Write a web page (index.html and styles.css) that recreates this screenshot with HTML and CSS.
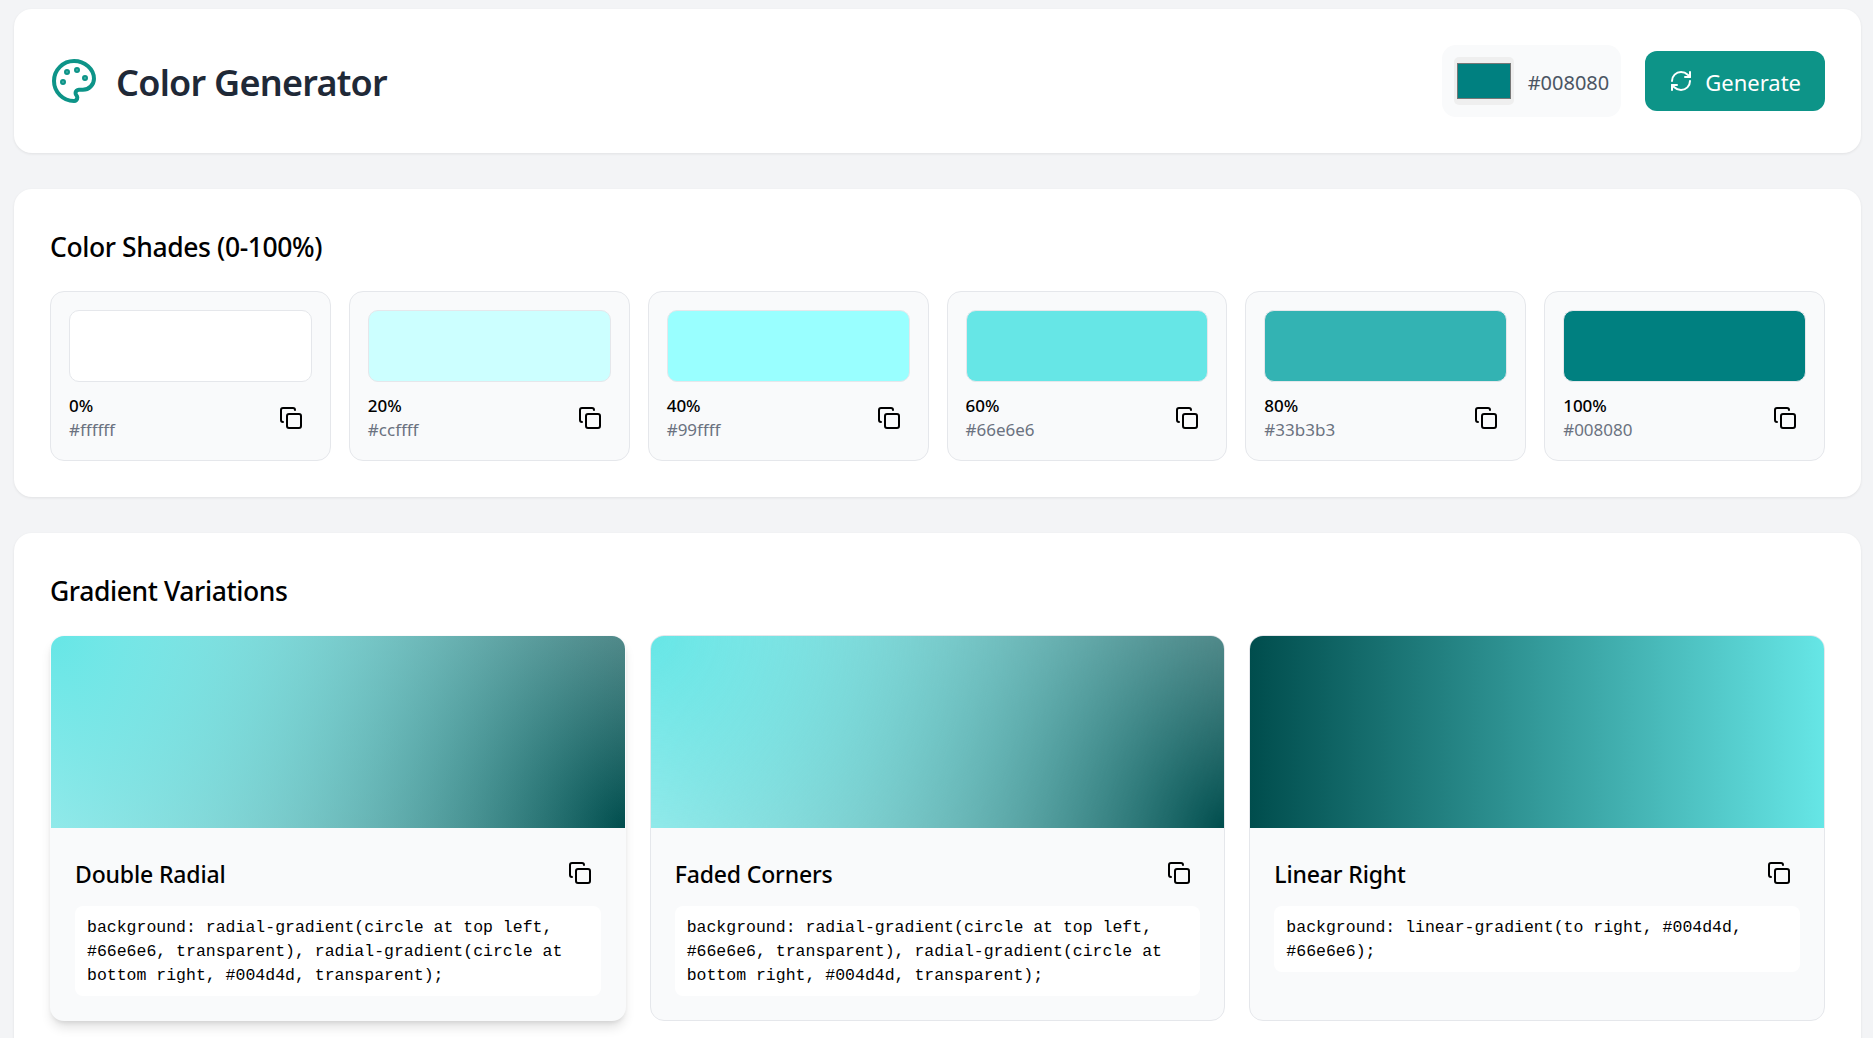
FILE: index.html
```html
<!DOCTYPE html>
<html lang="en">

<head>
	<meta charset="UTF-8">
	<title>Color Generator</title>
	<link rel="stylesheet" href="styles.css">
</head>
<body>
	<main>

		<!-- HEADER --------------------------------- -->
		<header class="panel topbar">
			<div class="brand">
				<svg class="brand-icon" viewBox="0 0 24 24"><circle cx="13.5" cy="6.5" r=".5" fill="currentColor"/><circle cx="17.5" cy="10.5" r=".5" fill="currentColor"/><circle cx="8.5" cy="7.5" r=".5" fill="currentColor"/><circle cx="6.5" cy="12.5" r=".5" fill="currentColor"/><path d="M12 2C6.5 2 2 6.5 2 12s4.5 10 10 10c.926 0 1.648-.746 1.648-1.688 0-.437-.18-.835-.437-1.125-.29-.289-.438-.652-.438-1.125a1.64 1.64 0 0 1 1.668-1.668h1.996c3.051 0 5.555-2.503 5.555-5.554C21.965 6.012 17.461 2 12 2z"/></svg>
				<h1>Color Generator</h1>
			</div>
			<div class="controls">
				<div class="picker">
					<input class="picker-input" type="color" value="#008080">
					<span class="nudge">#008080</span>
				</div>
				<button class="generate">
					<svg class="generate-icon" viewBox="0 0 24 24"><path d="M3 12a9 9 0 0 1 9-9 9.75 9.75 0 0 1 6.74 2.74L21 8"/><path d="M21 3v5h-5"/><path d="M21 12a9 9 0 0 1-9 9 9.75 9.75 0 0 1-6.74-2.74L3 16"/><path d="M8 16H3v5"/></svg>
					<span class="nudge">Generate</span>
				</button>
			</div>
		</header>

		<!-- SHADES --------------------------------- -->
		<section class="panel">
			<h2>Color Shades (0-100%)</h2>
			<div class="shades">
				<div class="shade">
					<div class="shade-swatch shade-0"></div>
					<div class="shade-info">
						<div><p class="shade-pct">0%</p><p class="shade-hex">#ffffff</p></div>
						<button class="copy"><svg viewBox="0 0 24 24"><rect x="8" y="8" width="14" height="14" rx="2"/><path d="M4 16c-1.1 0-2-.9-2-2V4c0-1.1.9-2 2-2h10c1.1 0 2 .9 2 2"/></svg></button>
					</div>
				</div>
				<div class="shade">
					<div class="shade-swatch shade-20"></div>
					<div class="shade-info">
						<div><p class="shade-pct">20%</p><p class="shade-hex">#ccffff</p></div>
						<button class="copy"><svg viewBox="0 0 24 24"><rect x="8" y="8" width="14" height="14" rx="2"/><path d="M4 16c-1.1 0-2-.9-2-2V4c0-1.1.9-2 2-2h10c1.1 0 2 .9 2 2"/></svg></button>
					</div>
				</div>
				<div class="shade">
					<div class="shade-swatch shade-40"></div>
					<div class="shade-info">
						<div><p class="shade-pct">40%</p><p class="shade-hex">#99ffff</p></div>
						<button class="copy"><svg viewBox="0 0 24 24"><rect x="8" y="8" width="14" height="14" rx="2"/><path d="M4 16c-1.1 0-2-.9-2-2V4c0-1.1.9-2 2-2h10c1.1 0 2 .9 2 2"/></svg></button>
					</div>
				</div>
				<div class="shade">
					<div class="shade-swatch shade-60"></div>
					<div class="shade-info">
						<div><p class="shade-pct">60%</p><p class="shade-hex">#66e6e6</p></div>
						<button class="copy"><svg viewBox="0 0 24 24"><rect x="8" y="8" width="14" height="14" rx="2"/><path d="M4 16c-1.1 0-2-.9-2-2V4c0-1.1.9-2 2-2h10c1.1 0 2 .9 2 2"/></svg></button>
					</div>
				</div>
				<div class="shade">
					<div class="shade-swatch shade-80"></div>
					<div class="shade-info">
						<div><p class="shade-pct">80%</p><p class="shade-hex">#33b3b3</p></div>
						<button class="copy"><svg viewBox="0 0 24 24"><rect x="8" y="8" width="14" height="14" rx="2"/><path d="M4 16c-1.1 0-2-.9-2-2V4c0-1.1.9-2 2-2h10c1.1 0 2 .9 2 2"/></svg></button>
					</div>
				</div>
				<div class="shade">
					<div class="shade-swatch shade-100"></div>
					<div class="shade-info">
						<div><p class="shade-pct">100%</p><p class="shade-hex">#008080</p></div>
						<button class="copy"><svg viewBox="0 0 24 24"><rect x="8" y="8" width="14" height="14" rx="2"/><path d="M4 16c-1.1 0-2-.9-2-2V4c0-1.1.9-2 2-2h10c1.1 0 2 .9 2 2"/></svg></button>
					</div>
				</div>
			</div>
		</section>

		<!-- GRADIENTS --------------------------------- -->
		<section class="panel">
			<h2>Gradient Variations</h2>
			<div class="gradients">
				<article class="gradient gradient-hover">
					<div class="gradient-preview double-radial"></div>
					<div class="gradient-body">
						<div class="gradient-head">
							<h3>Double Radial</h3>
							<button class="copy"><svg viewBox="0 0 24 24"><rect x="8" y="8" width="14" height="14" rx="2"/><path d="M4 16c-1.1 0-2-.9-2-2V4c0-1.1.9-2 2-2h10c1.1 0 2 .9 2 2"/></svg></button>
						</div>
						<code>background: radial-gradient(circle at top left, #66e6e6, transparent), radial-gradient(circle at bottom right, #004d4d, transparent);</code>
					</div>
				</article>
				<article class="gradient">
					<div class="gradient-preview faded-corners"></div>
					<div class="gradient-body">
						<div class="gradient-head">
							<h3>Faded Corners</h3>
							<button class="copy"><svg viewBox="0 0 24 24"><rect x="8" y="8" width="14" height="14" rx="2"/><path d="M4 16c-1.1 0-2-.9-2-2V4c0-1.1.9-2 2-2h10c1.1 0 2 .9 2 2"/></svg></button>
						</div>
						<code>background: radial-gradient(circle at top left, #66e6e6, transparent), radial-gradient(circle at bottom right, #004d4d, transparent);</code>
					</div>
				</article>
				<article class="gradient">
					<div class="gradient-preview linear-right"></div>
					<div class="gradient-body">
						<div class="gradient-head">
							<h3>Linear Right</h3>
							<button class="copy"><svg viewBox="0 0 24 24"><rect x="8" y="8" width="14" height="14" rx="2"/><path d="M4 16c-1.1 0-2-.9-2-2V4c0-1.1.9-2 2-2h10c1.1 0 2 .9 2 2"/></svg></button>
						</div>
						<code>background: linear-gradient(to right, #004d4d, #66e6e6);</code>
					</div>
				</article>
			</div>
		</section>

	</main>
</body>

</html>
```
FILE: styles.css
```css
/* GENERAL --------------------------------- */
* {
	box-sizing: border-box;
}
html,
body {
	margin: 0;
	padding: 0;
	height: 100%;
	overflow: hidden;
}
body {
	font-family: 'Noto Sans', 'Open Sans', sans-serif;
	color: #000;
	background-color: #f3f4f6;
}
h1,
h2,
h3,
p {
	margin: 0;
}
main {
	display: flex;
	flex-direction: column;
	gap: 36px;
	padding: 9px 12px 9px 14px;
}
button {
	font-family: inherit;
	border: none;
	cursor: pointer;
}
svg {
	fill: none;
	stroke: currentColor;
	stroke-width: 2;
	stroke-linecap: round;
	stroke-linejoin: round;
}
.panel {
	padding: 36px;
	background-color: #fff;
	border-radius: 18px;
	box-shadow: 0 1px 3px rgba(0, 0, 0, 0.08);
}
.nudge {
	padding-top: 2px;
}
h2 {
	margin-bottom: 24px;
	padding-top: 2px;
	font-size: 26.5px;
	font-weight: 500;
	line-height: 40px;
	letter-spacing: -0.4px;
}

/* HEADER --------------------------------- */
.topbar {
	display: flex;
	justify-content: space-between;
	align-items: center;
}
.brand {
	display: flex;
	align-items: center;
	gap: 18px;
}
.brand-icon {
	width: 48px;
	height: 48px;
	color: #0d9488;
}
h1 {
	padding-top: 2px;
	font-size: 36px;
	font-weight: 600;
	letter-spacing: -0.75px;
	color: #1f2937;
}
.controls {
	display: flex;
	align-items: center;
	gap: 24px;
}
.picker {
	display: flex;
	align-items: center;
	gap: 14px;
	padding: 12px;
	font-size: 20px;
	color: #4b5563;
	background-color: #f9fafb;
	border-radius: 14px;
}
.picker-input {
	width: 60px;
	height: 48px;
	padding: 0;
	border: none;
	border-radius: 5px;
	background-color: #efefef;
}
.picker-input::-webkit-color-swatch-wrapper {
	padding: 6px 3px;
}
.generate {
	display: flex;
	align-items: center;
	gap: 12px;
	padding: 0 24px;
	height: 60px;
	font-size: 22px;
	color: #fff;
	background-color: #0d9488;
	border-radius: 12px;
}
.generate-icon {
	width: 24px;
	height: 24px;
}

/* SHADES --------------------------------- */
.shades {
	display: grid;
	grid-template-columns: repeat(6, 1fr);
	gap: 18px;
}
.shade {
	padding: 18px;
	background-color: #f9fafb;
	border: 1px solid #e5e7eb;
	border-radius: 14px;
}
.shade-swatch {
	height: 72px;
	margin-bottom: 12px;
	border: 1px solid #e5e7eb;
	border-radius: 10px;
}
.shade-0 { background-color: #ffffff; }
.shade-20 { background-color: #ccffff; }
.shade-40 { background-color: #99ffff; }
.shade-60 { background-color: #66e6e6; }
.shade-80 { background-color: #33b3b3; }
.shade-100 { background-color: #008080; }
.shade-info {
	display: flex;
	justify-content: space-between;
	align-items: center;
}
.shade-pct {
	font-size: 17px;
	font-weight: 500;
	line-height: 24px;
}
.shade-hex {
	font-size: 17px;
	line-height: 24px;
	color: #6b7280;
}
.copy {
	display: flex;
	padding: 9px;
	color: #000;
	background: none;
}
.copy svg {
	width: 24px;
	height: 24px;
}

/* GRADIENTS --------------------------------- */
.gradients {
	display: grid;
	grid-template-columns: repeat(3, 1fr);
	gap: 24px;
}
.gradient {
	background-color: #f9fafb;
	border: 1px solid #e5e7eb;
	border-radius: 14px;
	overflow: hidden;
}
.gradient-hover {
	border-color: transparent;
	box-shadow: 0 8px 12px -2px rgba(0, 0, 0, 0.12), 0 3px 5px -2px rgba(0, 0, 0, 0.1);
}
.gradient-preview {
	height: 192px;
}
.double-radial,
.faded-corners {
	background: radial-gradient(circle at top left, #66e6e6, transparent), radial-gradient(circle at bottom right, #004d4d, transparent);
}
.linear-right {
	background: linear-gradient(to right, #004d4d, #66e6e6);
}
.gradient-body {
	padding: 24px;
}
.gradient-head {
	display: flex;
	justify-content: space-between;
	align-items: center;
	margin-bottom: 12px;
}
h3 {
	padding-top: 2px;
	font-size: 23px;
	font-weight: 500;
	letter-spacing: -0.15px;
}
code {
	display: block;
	padding: 10px 12px 8px;
	font-family: 'Liberation Mono', monospace;
	font-size: 16.5px;
	line-height: 24px;
	background-color: #fff;
	border-radius: 8px;
}
```
